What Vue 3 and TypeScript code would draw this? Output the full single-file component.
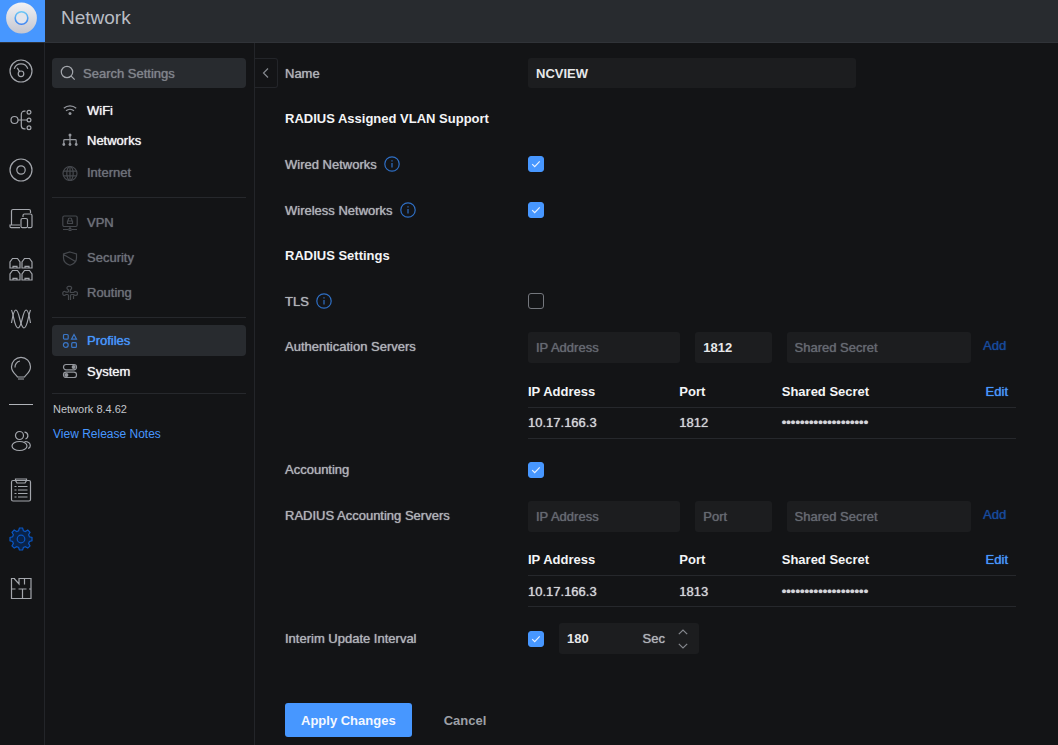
<script setup lang="ts">
import { ref } from 'vue'

interface NavItem {
  label: string
  icon: string
  state: 'on' | 'off' | 'active'
}

interface ServerGroup {
  id: string
  label: string
  port: string
  savedPort: string
}

const navGroups: NavItem[][] = [
  [
    { label: 'WiFi', icon: 'wifi', state: 'on' },
    { label: 'Networks', icon: 'networks', state: 'on' },
    { label: 'Internet', icon: 'internet', state: 'off' },
  ],
  [
    { label: 'VPN', icon: 'vpn', state: 'off' },
    { label: 'Security', icon: 'security', state: 'off' },
    { label: 'Routing', icon: 'routing', state: 'off' },
  ],
  [
    { label: 'Profiles', icon: 'profiles', state: 'active' },
    { label: 'System', icon: 'system', state: 'on' },
  ],
]

const railTop = ['Dashboard', 'Topology', 'Devices', 'Clients', 'Ports', 'Radios', 'Insights']
const railBottom = ['Admins', 'Log', 'Settings', 'Floor plan']

const auth = ref<ServerGroup>({ id: 'auth', label: 'Authentication Servers', port: '1812', savedPort: '1812' })
const acct = ref<ServerGroup>({ id: 'acct', label: 'RADIUS Accounting Servers', port: '', savedPort: '1813' })

const profileName = ref('NCVIEW')
const wired = ref(true)
const wireless = ref(true)
const tls = ref(false)
const accounting = ref(true)
const interim = ref(true)
const seconds = ref('180')
const secret = '•'.repeat(19)

function step(by: number) {
  seconds.value = String(Math.max(0, Number(seconds.value) + by))
}
</script>

<template>
  <div class="app">
    <header class="topbar">
      <a class="brand" href="#" aria-label="Home">
        <svg width="32" height="32" viewBox="0 0 32 32">
          <defs>
            <linearGradient id="disc" x1="0" y1="0" x2="0" y2="1">
              <stop offset="0" stop-color="#f1f2f5" />
              <stop offset="1" stop-color="#c4c6d0" />
            </linearGradient>
            <linearGradient id="ring" x1="0" y1="0" x2="0" y2="1">
              <stop offset="0" stop-color="#6cc8f5" />
              <stop offset="1" stop-color="#3d83f2" />
            </linearGradient>
          </defs>
          <circle cx="15.5" cy="16" r="15.4" fill="url(#disc)" />
          <circle cx="15.5" cy="16" r="6.3" fill="#e2e5ec" stroke="url(#ring)" stroke-width="1.6" />
        </svg>
      </a>
      <h1>Network</h1>
    </header>

    <div class="body">
      <nav class="rail" aria-label="Sections">
        <div class="rail-top">
          <a v-for="name in railTop" :key="name" href="#" :aria-label="name">
            <svg width="24" height="24" viewBox="0 0 24 24">
              <template v-if="name === 'Dashboard'">
                <circle cx="12" cy="12" r="11" />
                <path d="M5.2 9.8a7.2 7.2 0 0 1 13.6 0M8.2 8.800l2.600 4" />
                <circle cx="12" cy="14.8" r="2.8" />
              </template>
              <template v-else-if="name === 'Topology'">
                <circle cx="5.5" cy="12" r="3.5" />
                <circle cx="20" cy="4.3" r="1.9" />
                <circle cx="20" cy="12" r="1.9" />
                <circle cx="20" cy="19.7" r="1.900" />
                <path d="M9 12h9M16.5 3.2h-1.200a3 3 0 0 0-3 3v11.600a3 3 0 0 0 3 3h1.200" />
              </template>
              <template v-else-if="name === 'Devices'">
                <circle cx="12" cy="12" r="11" />
                <circle cx="12" cy="12" r="4.2" />
              </template>
              <template v-else-if="name === 'Clients'">
                <path d="M2.500 17.500V4a1.500 1.500 0 0 1 1.500-1.500H20A1.500 1.500 0 0 1 21.500 4v2M11 18H1v1.500a1.200 1.200 0 0 0 1.200 1.200H11" />
                <path d="M14 10V8.500A1.500 1.500 0 0 1 15.500 7h6A1.500 1.500 0 0 1 23 8.500v10.700a1.500 1.500 0 0 1-1.500 1.500H19" />
                <rect x="12" y="11.5" width="6.5" height="9.2" rx="1.500" />
              </template>
              <template v-else-if="name === 'Ports'">
                <g v-for="p in [[0, 0], [12, 0], [0, 12], [12, 12]]" :key="p.join()" :transform="`translate(${p[0]} ${p[1]})`">
                  <path d="M1 11V5l2.500-3.500h5L11 5v6zM4 10.500V9.300h4v1.200" />
                </g>
              </template>
              <template v-else-if="name === 'Radios'">
                <path d="M2.500 16C3.800 8 4.800 3 6.800 3C10.500 3 11 21 15 21C18.500 21 19 9 21.500 3" />
                <path d="M2.500 3C5 9 5.500 21 9 21C13 21 13.500 3 17.200 3C19.200 3 20.200 8 21.500 16" />
              </template>
              <template v-else>
                <path d="M8.500 21C8 19 2.500 17 2.500 10.800a9.500 9.500 0 0 1 19 0C21.500 17 16 19 15.500 21zM9 23h6" />
                <path d="M6 11.500A6 6 0 0 1 11 5" />
              </template>
            </svg>
          </a>
        </div>
        <hr />
        <div class="rail-bottom">
          <a v-for="name in railBottom" :key="name" href="#" :class="{ current: name === 'Settings' }" :aria-label="name">
            <svg width="24" height="24" viewBox="0 0 24 24">
              <template v-if="name === 'Admins'">
                <circle cx="10.500" cy="6.500" r="4" />
                <ellipse cx="10.500" cy="17" rx="7.500" ry="4.500" />
                <path d="M15.500 3.200a3.500 3.500 0 0 1 1 6.800M15.500 12.500c3.500 0 5.800 1.800 5.800 4.200 0 1.500-.8 2.300-2.200 2.800" />
              </template>
              <template v-else-if="name === 'Log'">
                <rect x="2.500" y="2.500" width="19" height="20.500" rx="1.500" />
                <path d="M6.500 2.500V1h11v1.500L16 5H8z" />
                <path d="M5.500 8.500h2M5.500 12h2M5.500 15.500h2M5.500 19h2M9 8.500h9.500M9 12h9.500M9 15.500h9.500M9 19h9.500" />
              </template>
              <template v-else-if="name === 'Settings'">
                <path class="gear" d="M10.400 1h3.200l.8 2.700 1.900.8 2.500-1.400 2.200 2.200-1.400 2.500.8 1.900 2.600.8v3.200l-2.600.8-.8 1.900 1.400 2.500-2.200 2.200-2.500-1.400-1.900.8-.8 2.500h-3.200l-.8-2.500-1.900-.8-2.500 1.400-2.200-2.200 1.400-2.500-.8-1.900-2.600-.8v-3.200l2.600-.8.8-1.900-1.400-2.500 2.200-2.200 2.500 1.400 1.900-.8z" />
                <circle cx="12" cy="12" r="3.800" />
              </template>
              <template v-else>
                <path d="M5.500 2.500h-3v20h19.500v-20H10v5.500L5.500 3zM15.500 2.500v6M2.500 13h4M9.500 13h8M13.500 13v9.500M20 13h2" />
              </template>
            </svg>
          </a>
        </div>
      </nav>

      <aside class="sidebar">
        <label class="search">
          <svg width="16" height="16" viewBox="0 0 16 16">
            <circle cx="7" cy="7" r="5.700" />
            <path d="M11.200 11.200L14.700 14.700" />
          </svg>
          <input type="search" placeholder="Search Settings" aria-label="Search Settings" />
        </label>
        <nav aria-label="Settings">
          <template v-for="(group, g) in navGroups" :key="g">
            <ul>
              <li v-for="item in group" :key="item.label">
                <a href="#" :class="['nav-item', item.state]">
                  <svg width="16" height="16" viewBox="0 0 16 16">
                    <template v-if="item.icon === 'wifi'">
                      <path d="M1.800 6.200a9.200 9.200 0 0 1 12.400 0M4 8.800a6 6 0 0 1 8 0" />
                      <circle class="solid" cx="8" cy="11.500" r="1.500" />
                    </template>
                    <template v-else-if="item.icon === 'networks'">
                      <path d="M8 3v9M1.800 12.500V8.500a.8.8 0 0 1 .8-.8h10.800a.8.8 0 0 1 .8.8v4" />
                      <circle class="solid" cx="8" cy="3" r="1.500" />
                      <circle class="solid" cx="1.800" cy="12.500" r="1.400" />
                      <circle class="solid" cx="8" cy="12.500" r="1.400" />
                      <circle class="solid" cx="14.200" cy="12.500" r="1.400" />
                    </template>
                    <template v-else-if="item.icon === 'internet'">
                      <circle cx="8" cy="8.500" r="7" />
                      <ellipse cx="8" cy="8.500" rx="3.200" ry="7" />
                      <path d="M8 1.500v14M1.500 6.200h13M1.500 10.800h13" />
                    </template>
                    <template v-else-if="item.icon === 'vpn'">
                      <rect x=".8" y="1" width="14.400" height="10.500" rx="1.500" />
                      <path d="M5.500 8.500V6h5v2.500zM6.200 6V4.800a1.800 1.800 0 0 1 3.600 0V6M8 11.500v2M1 14.500h5M10 14.500h5" />
                      <circle cx="8" cy="14.500" r="1.200" />
                    </template>
                    <template v-else-if="item.icon === 'security'">
                      <path d="M8 2l6.500 2v4c0 3.500-3 6-6.500 7.200C4.500 14 1.500 11.500 1.500 8V4zM1.500 4.500L13 11.200" />
                    </template>
                    <template v-else-if="item.icon === 'routing'">
                      <path d="M6.500 7V5L5.400 4a1.600 1.600 0 0 1 1-2.700h1.800a1.600 1.600 0 0 1 1 2.700L8.300 5v2.500h3.500l1-.9h.8a1.500 1.500 0 0 1 0 3.800h-.8l-1-.9H9.500a1 1 0 0 0-1 1V15M6.500 15v-4.500a1 1 0 0 0-1-1H4l-1 .8A1.600 1.600 0 0 1 .8 9V8A1.600 1.600 0 0 1 3 6.500l1 .7h2.500" />
                      <path d="M11.500 10.500V14" />
                    </template>
                    <template v-else-if="item.icon === 'profiles'">
                      <rect x="1.500" y="1.500" width="4.700" height="4.700" rx="1" />
                      <path d="M12 1.500l2.500 4.700h-5z" />
                      <circle cx="3.800" cy="12" r="2.400" />
                      <rect x="9.700" y="9.700" width="4.700" height="4.700" rx="1" />
                    </template>
                    <template v-else>
                      <rect x="1.500" y="1.500" width="13" height="5.300" rx="2.600" />
                      <rect x="1.500" y="9.200" width="13" height="5.300" rx="2.600" />
                      <circle class="solid" cx="11.600" cy="4.100" r="2" />
                      <circle class="solid" cx="4.400" cy="11.900" r="2" />
                    </template>
                  </svg>
                  {{ item.label }}
                </a>
              </li>
            </ul>
            <hr />
          </template>
        </nav>
        <p class="version">Network 8.4.62</p>
        <a class="notes" href="#">View Release Notes</a>
      </aside>

      <main class="content">
        <button class="collapse" type="button" aria-label="Collapse sidebar">
          <svg width="12" height="12" viewBox="0 0 12 12"><path d="M8 1.500L3.500 6 8 10.500" /></svg>
        </button>

        <form class="form" @submit.prevent>
          <div class="row">
            <label class="label" for="name">Name</label>
            <input id="name" v-model="profileName" class="field name" type="text" />
          </div>

          <h2>RADIUS Assigned VLAN Support</h2>

          <div class="row">
            <label class="label" for="wired">
              Wired Networks
              <svg class="info" width="16" height="16" viewBox="0 0 16 16"><circle cx="8" cy="8" r="7.200" /><path d="M8 7v4.500M8 4.300v1.300" /></svg>
            </label>
            <span class="check">
              <input id="wired" v-model="wired" type="checkbox" />
              <svg width="16" height="16" viewBox="0 0 16 16"><path d="M4.200 8.200l2.500 2.500 5-5.400" /></svg>
            </span>
          </div>
          <div class="row">
            <label class="label" for="wireless">
              Wireless Networks
              <svg class="info" width="16" height="16" viewBox="0 0 16 16"><circle cx="8" cy="8" r="7.200" /><path d="M8 7v4.500M8 4.300v1.300" /></svg>
            </label>
            <span class="check">
              <input id="wireless" v-model="wireless" type="checkbox" />
              <svg width="16" height="16" viewBox="0 0 16 16"><path d="M4.200 8.200l2.500 2.500 5-5.400" /></svg>
            </span>
          </div>

          <h2>RADIUS Settings</h2>

          <div class="row">
            <label class="label" for="tls">
              TLS
              <svg class="info" width="16" height="16" viewBox="0 0 16 16"><circle cx="8" cy="8" r="7.200" /><path d="M8 7v4.500M8 4.300v1.300" /></svg>
            </label>
            <span class="check">
              <input id="tls" v-model="tls" type="checkbox" />
              <svg width="16" height="16" viewBox="0 0 16 16"><path d="M4.200 8.200l2.500 2.500 5-5.400" /></svg>
            </span>
          </div>

          <template v-for="s in [auth, acct]" :key="s.id">
            <div v-if="s.id === 'acct'" class="row">
              <label class="label" for="accounting">Accounting</label>
              <span class="check">
                <input id="accounting" v-model="accounting" type="checkbox" />
                <svg width="16" height="16" viewBox="0 0 16 16"><path d="M4.200 8.200l2.500 2.500 5-5.400" /></svg>
              </span>
            </div>
            <div class="row servers">
              <label class="label" :for="`${s.id}-ip`">{{ s.label }}</label>
              <div>
                <div class="entry">
                  <input :id="`${s.id}-ip`" class="field" type="text" placeholder="IP Address" />
                  <input v-model="s.port" class="field" type="text" placeholder="Port" aria-label="Port" />
                  <input class="field" type="text" placeholder="Shared Secret" aria-label="Shared Secret" />
                  <button class="link add" type="button">Add</button>
                </div>
                <table>
                  <thead>
                    <tr>
                      <th scope="col">IP Address</th>
                      <th scope="col">Port</th>
                      <th scope="col">Shared Secret</th>
                      <th class="action"><button class="link" type="button">Edit</button></th>
                    </tr>
                  </thead>
                  <tbody>
                    <tr>
                      <td>10.17.166.3</td>
                      <td>{{ s.savedPort }}</td>
                      <td colspan="2">{{ secret }}</td>
                    </tr>
                  </tbody>
                </table>
              </div>
            </div>
          </template>

          <div class="row">
            <label class="label" for="interim">Interim Update Interval</label>
            <div class="interval">
              <span class="check">
                <input id="interim" v-model="interim" type="checkbox" />
                <svg width="16" height="16" viewBox="0 0 16 16"><path d="M4.200 8.200l2.500 2.500 5-5.400" /></svg>
              </span>
              <div class="stepper">
                <input v-model="seconds" class="field" type="text" aria-label="Interval in seconds" />
                <span class="unit">Sec</span>
                <span class="arrows">
                  <button type="button" aria-label="Increase" @click="step(1)">
                    <svg width="10" height="6" viewBox="0 0 10 6"><path d="M.8 5.200L5 1l4.200 4.200" /></svg>
                  </button>
                  <button type="button" aria-label="Decrease" @click="step(-1)">
                    <svg width="10" height="6" viewBox="0 0 10 6"><path d="M.8.8L5 5 9.200.8" /></svg>
                  </button>
                </span>
              </div>
            </div>
          </div>

          <div class="actions">
            <button class="apply" type="submit">Apply Changes</button>
            <button class="cancel" type="button">Cancel</button>
          </div>
        </form>
      </main>
    </div>
  </div>
</template>

<style>
body {
  margin: 0;
  background: #131416;
}
</style>

<style scoped>
.app {
  display: flex;
  flex-direction: column;
  min-height: 100vh;
  color: #b0b3b9;
  background: #131416;
  font-family: "Liberation Sans", Arial, sans-serif;
  font-size: 13px;
}

.app *,
.app *::before {
  box-sizing: border-box;
}

a {
  text-decoration: none;
}

svg {
  flex: none;
  fill: none;
  stroke: currentColor;
  stroke-width: 1.2;
}

button,
input {
  margin: 0;
  padding: 0;
  border: 0;
  color: inherit;
  background: none;
  font: inherit;
}

button {
  cursor: pointer;
}

hr {
  width: 100%;
  height: 1px;
  margin: 0;
  border: 0;
  background: #26282c;
}

.topbar {
  display: flex;
  height: 43px;
  background: #282b2f;
  border-bottom: 1px solid #303338;
}

.brand {
  display: flex;
  justify-content: center;
  width: 45px;
  height: 42px;
  padding: 2px 2px 0 0;
  background: #4797ff;
}

.brand svg {
  stroke: none;
}

h1 {
  margin: 0 0 0 16px;
  color: #b9bdc4;
  font-size: 19px;
  font-weight: 400;
  line-height: 36px;
}

.body {
  display: flex;
  flex: 1;
}

.rail {
  display: flex;
  flex: none;
  flex-direction: column;
  align-items: center;
  width: 45px;
  padding: 3px 3px 0 0;
  color: #a3a6ac;
  border-right: 1px solid #232529;
}

.rail a {
  display: flex;
  align-items: center;
  justify-content: center;
  color: inherit;
}

.rail-top {
  display: grid;
  grid-auto-rows: 1fr;
  height: 347px;
}

.rail hr {
  width: 24px;
  margin: 11px 0;
  background: #b0b3b8;
}

.rail-bottom a {
  height: 49px;
}

.rail a.current {
  color: #0a56c2;
}

.gear {
  fill: #0a2348;
}

.sidebar {
  flex: none;
  width: 210px;
  padding: 15px 8px 0 7px;
  border-right: 1px solid #232529;
}

.search {
  display: flex;
  gap: 7px;
  align-items: center;
  height: 30px;
  margin-bottom: 7px;
  padding: 0 8px;
  color: #a3a6ac;
  background: #282b2f;
  border-radius: 4px;
}

.search input {
  flex: 1;
  min-width: 0;
  outline: 0;
}

.search input::placeholder {
  color: #80848b;
  opacity: 1;
  text-shadow: 0 0 1px #80848b;
}

ul {
  margin: 0;
  padding: 0;
  list-style: none;
}

.sidebar hr {
  margin: 7px 0;
}

.nav-item {
  display: flex;
  gap: 9px;
  align-items: center;
  height: 30px;
  padding: 0 10px;
  color: #f4f5f6;
  border-radius: 4px;
  text-shadow: 0 0 1px currentColor;
}

.nav-item svg {
  color: #94979d;
}

.nav-item.off {
  height: 35px;
  color: #6c7078;
}

.nav-item.off svg {
  color: #45484d;
}

.nav-item.active {
  height: 31px;
  color: #4797ff;
  background: #282b2f;
}

.nav-item.active svg {
  color: #3a76c6;
}

.solid {
  fill: currentColor;
  stroke: none;
}

.version,
.notes {
  margin: 0 1px;
  line-height: 16px;
}

.version {
  margin-bottom: 9px;
  color: #c3c6cb;
  font-size: 11px;
}

.notes {
  color: #4797ff;
  font-size: 12px;
}

.content {
  display: flex;
  flex: 1;
  align-items: flex-start;
  min-width: 0;
  padding: 15px 42px 8px 0;
}

.collapse {
  display: flex;
  flex: none;
  align-items: center;
  justify-content: center;
  width: 23px;
  height: 30px;
  color: #85888e;
  border: 1px solid #232529;
  border-left: 0;
  border-radius: 0 3px 3px 0;
}

.form {
  display: flex;
  flex: 1;
  flex-direction: column;
  gap: 16px;
  min-width: 0;
  margin-left: 7px;
}

.row {
  display: grid;
  grid-template-columns: 243px minmax(0, 1fr);
  align-items: center;
  min-height: 30px;
}

.servers {
  align-items: start;
}

.label {
  display: flex;
  gap: 7px;
  align-items: center;
  line-height: 29px;
  text-shadow: 0 0 1px currentColor;
}

.info {
  color: #2f6fc4;
}

h2 {
  margin: 0;
  color: #f4f5f6;
  font-size: 13px;
  font-weight: 700;
  line-height: 29px;
}

.field {
  width: 100%;
  min-width: 0;
  height: 31px;
  padding: 0 8px;
  color: #e6e7e9;
  background: #1c1d1f;
  border-radius: 3px;
  outline: 0;
  font-weight: 700;
}

.field::placeholder {
  color: #656971;
  font-weight: 400;
  opacity: 1;
  text-shadow: 0 0 1px #656971;
}

.name {
  max-width: 328px;
  height: 30px;
}

.check {
  display: grid;
  width: 16px;
  height: 16px;
}

.check input,
.check svg {
  grid-area: 1 / 1;
}

.check input {
  width: 16px;
  height: 16px;
  border: 1px solid #74777d;
  border-radius: 3px;
  appearance: none;
}

.check input:checked {
  background: #4797ff;
  border-color: #4797ff;
}

.check svg {
  color: #e8f1ff;
  pointer-events: none;
  visibility: hidden;
}

.check input:checked + svg {
  visibility: visible;
}

.entry {
  display: grid;
  grid-template-columns: 152fr 76fr 184fr 30px;
  gap: 15px;
  margin-bottom: 13px;
}

.link {
  color: #4797ff;
  text-align: left;
  text-shadow: 0 0 1px currentColor;
}

.add {
  height: 27px;
  margin-left: -3px;
  color: #174a9c;
}

table {
  width: 100%;
  border-collapse: collapse;
  table-layout: fixed;
}

th,
td {
  height: 31px;
  padding: 0;
  border-bottom: 1px solid #26282c;
  text-align: left;
}

td {
  color: #d3d5d9;
  text-shadow: 0 0 1px currentColor;
}

th {
  color: #f4f5f6;
}

th:nth-child(1) {
  width: 31%;
}

th:nth-child(2) {
  width: 21%;
}

.action {
  padding-right: 8px;
  text-align: right;
}

.action .link {
  font-weight: 400;
}

.interval {
  display: flex;
  gap: 15px;
  align-items: center;
}

.stepper {
  display: flex;
  align-items: center;
  width: 140px;
  height: 31px;
  padding-right: 11px;
  background: #1c1d1f;
  border-radius: 3px;
}

.stepper .field {
  flex: 1;
  background: none;
}

.unit {
  text-shadow: 0 0 1px currentColor;
}

.arrows {
  display: flex;
  flex-direction: column;
  gap: 8px;
  margin-left: 13px;
}

.arrows button {
  display: flex;
  color: #85888e;
}

.actions {
  display: flex;
  gap: 32px;
  align-items: center;
  margin-top: 33px;
}

.apply {
  height: 34px;
  padding: 0 16px;
  color: #f4f8ff;
  background: #4797ff;
  border-radius: 3px;
  font-weight: 700;
}

.cancel {
  color: #9da0a6;
  font-weight: 700;
}
</style>
